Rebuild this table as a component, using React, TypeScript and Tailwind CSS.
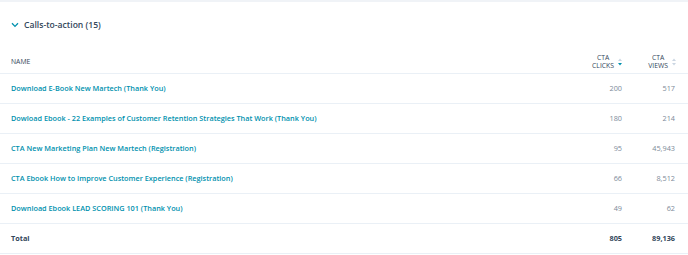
import React from 'react';

interface Row {
  name: string;
  clicks: string;
  views: string;
}

const rows: Row[] = [
  { name: 'Download E-Book New Martech (Thank You)', clicks: '200', views: '517' },
  { name: 'Dowload Ebook - 22 Examples of Customer Retention Strategies That Work (Thank You)', clicks: '180', views: '214' },
  { name: 'CTA New Marketing Plan New Martech (Registration)', clicks: '95', views: '45,943' },
  { name: 'CTA Ebook How to Improve Customer Experience (Registration)', clicks: '66', views: '8,512' },
  { name: 'Download Ebook LEAD SCORING 101 (Thank You)', clicks: '49', views: '62' },
];

const SortIcon: React.FC<{ active?: boolean }> = ({ active }) => (
  <svg width="4" height="8" viewBox="0 0 4 8" className="ml-[4px] shrink-0">
    <path d="M0 3 L2 0.5 L4 3 Z" fill="#cbd6e2" />
    <path d="M0 5 L2 7.5 L4 5 Z" fill={active ? '#0091ae' : '#cbd6e2'} />
  </svg>
);

const App: React.FC = () => {
  return (
    <div className="w-[688px] h-[255px] bg-white font-['Open_Sans',sans-serif] text-[#33475b]">
      <div className="h-[2px] bg-[#f0f3f7]" />
      <div className="flex items-center h-[46px] pl-[11px]">
        <svg width="8" height="6" viewBox="0 0 8 6" className="mr-[5px]">
          <path d="M1 1.2 L4 4.4 L7 1.2" fill="none" stroke="#0091ae" strokeWidth="1.3" />
        </svg>
        <span className="text-[8.6px] font-semibold">Calls-to-action (15)</span>
      </div>
      <div className="flex items-end h-[26px] border-b border-[#eaf0f6] pb-[3px]">
        <div className="flex-1 pl-[11px] text-[6.8px] uppercase leading-[8px] pb-[4px]">Name</div>
        <div className="w-[54px] pr-[12px] flex items-center justify-end text-[6.8px] leading-[8px]">
          <span className="text-center">CTA<br />CLICKS</span>
          <SortIcon active />
        </div>
        <div className="w-[54px] pr-[12px] flex items-center justify-end text-[6.8px] leading-[8px]">
          <span className="text-center">CTA<br />VIEWS</span>
          <SortIcon />
        </div>
      </div>
      {rows.map((r) => (
        <div key={r.name} className="flex items-center h-[30px] border-b border-[#eaf0f6] text-[7.3px]">
          <div className="flex-1 pl-[11px] font-semibold text-[#0091ae]">{r.name}</div>
          <div className="w-[54px] text-right pr-[12px] text-[#7c8a99]">{r.clicks}</div>
          <div className="w-[54px] text-right pr-[13px] text-[#7c8a99]">{r.views}</div>
        </div>
      ))}
      <div className="flex items-center h-[30px] border-b border-[#eaf0f6] text-[7.3px] font-bold">
        <div className="flex-1 pl-[11px]">Total</div>
        <div className="w-[54px] text-right pr-[12px]">805</div>
        <div className="w-[54px] text-right pr-[13px]">89,136</div>
      </div>
    </div>
  );
};

export default App;
